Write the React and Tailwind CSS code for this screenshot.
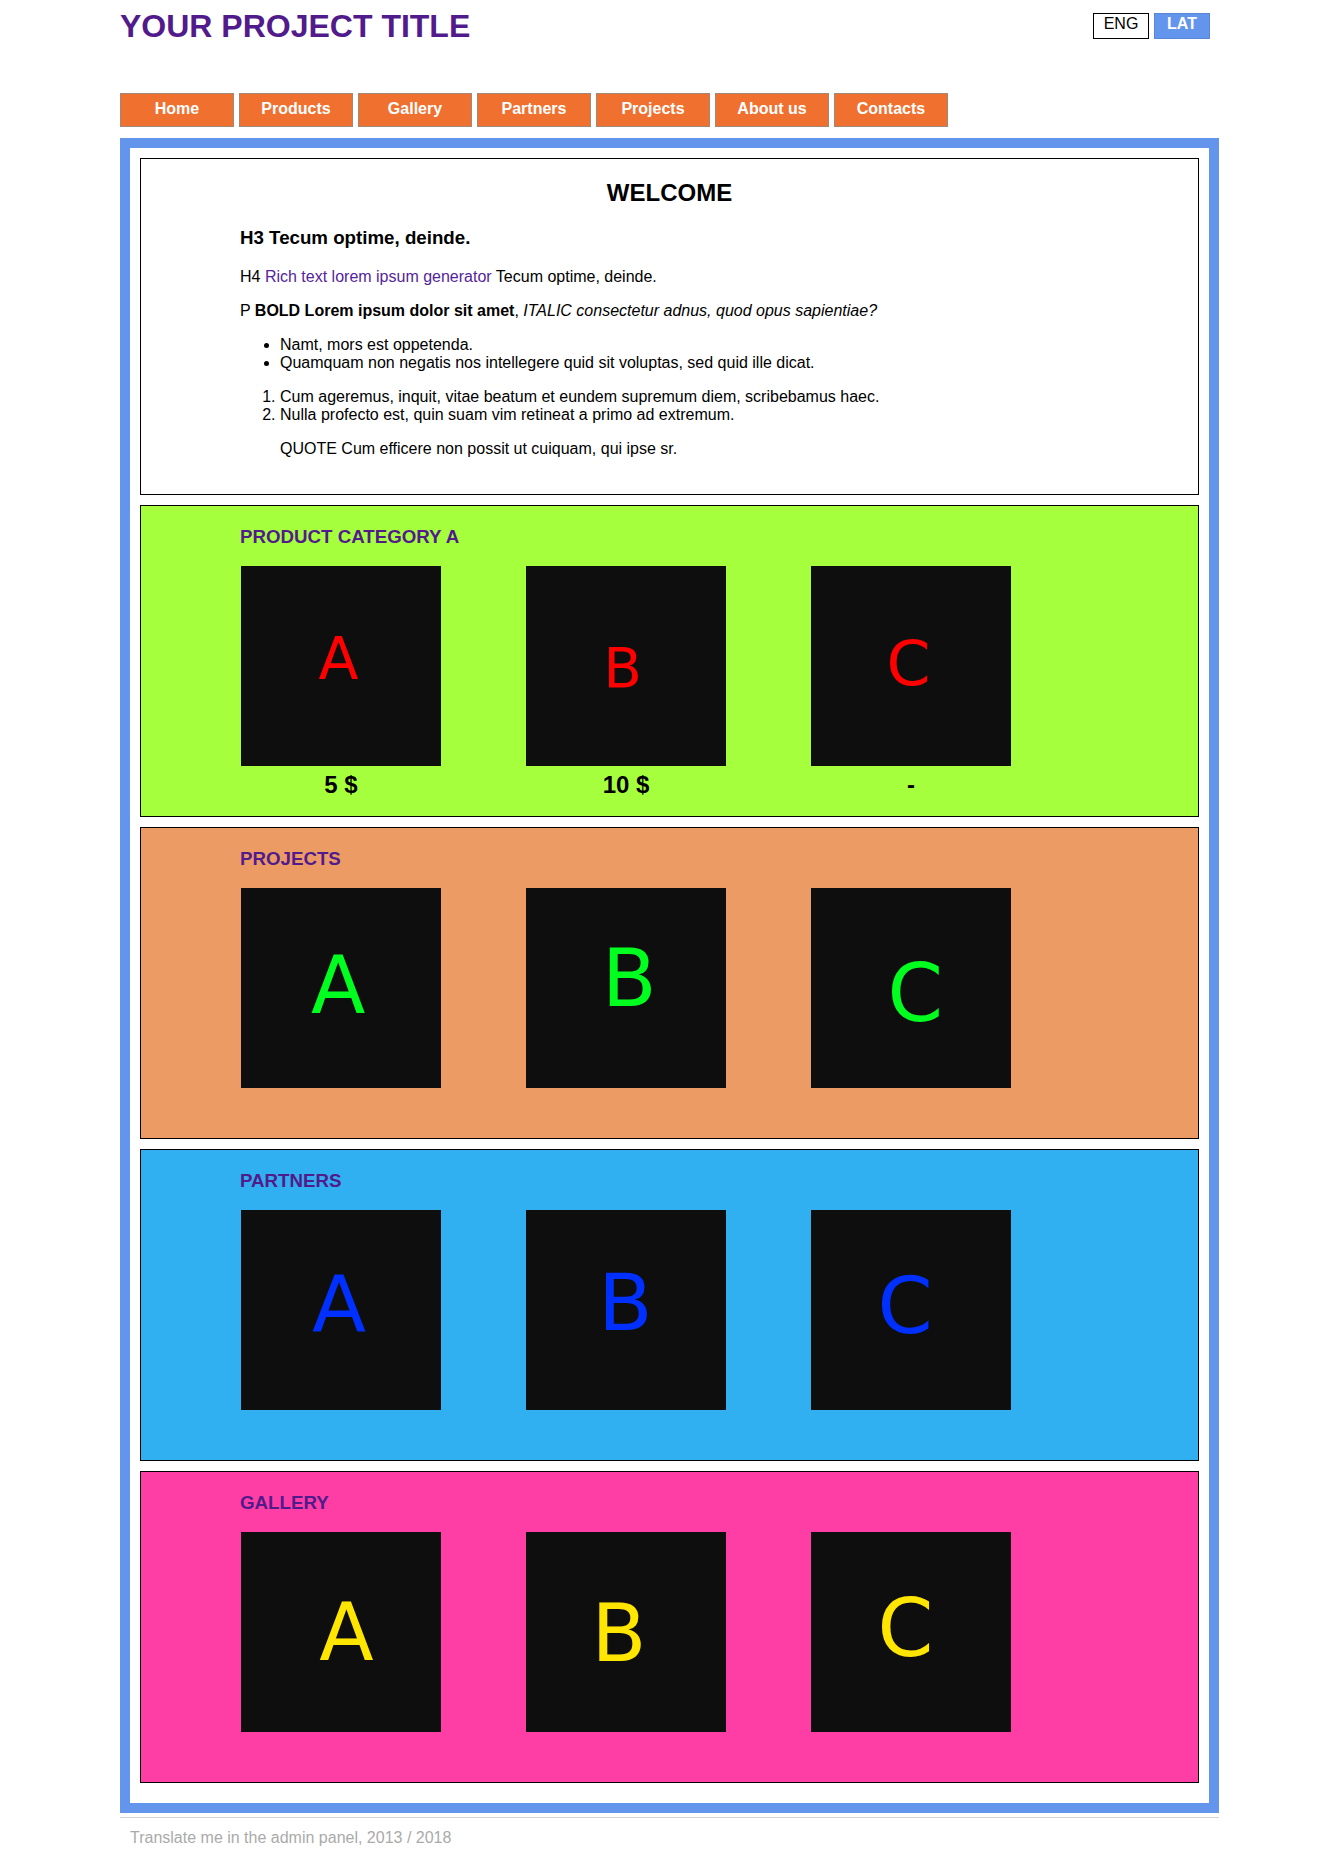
import React from 'react';

// --- Data ---
const navItems = ['Home', 'Products', 'Gallery', 'Partners', 'Projects', 'About us', 'Contacts'];

const sections = [
  {
    title: 'PRODUCT CATEGORY A',
    bg: 'bg-[#a6ff3c]',
    color: '#ff0000',
    items: [
      { letter: 'A', x: 77.5, y: 112.5, size: 58.5, caption: '5 $' },
      { letter: 'B', x: 77.5, y: 120.7, size: 56, caption: '10 $' },
      { letter: 'C', x: 75.5, y: 118.8, size: 63, caption: '-' },
    ],
  },
  {
    title: 'PROJECTS',
    bg: 'bg-[#ed9b64]',
    color: '#00ff1e',
    items: [
      { letter: 'A', x: 70, y: 125, size: 79.5 },
      { letter: 'B', x: 76, y: 118, size: 79.5 },
      { letter: 'C', x: 76.5, y: 133, size: 79.5 },
    ],
  },
  {
    title: 'PARTNERS',
    bg: 'bg-[#30b0f0]',
    color: '#0030ff',
    items: [
      { letter: 'A', x: 71, y: 122, size: 79 },
      { letter: 'B', x: 72.3, y: 120, size: 79 },
      { letter: 'C', x: 66.6, y: 123, size: 79 },
    ],
  },
  {
    title: 'GALLERY',
    bg: 'bg-[#ff3ea5]',
    color: '#ffe600',
    items: [
      { letter: 'A', x: 78.2, y: 128, size: 79.5 },
      { letter: 'B', x: 65.6, y: 129, size: 80 },
      { letter: 'C', x: 66.5, y: 124.3, size: 80 },
    ],
  },
];

// --- Header with title and language switch ---
const Header = () => (
  <div className="flex justify-between items-start h-[93px]">
    <h1 className="mt-[8px] text-[32px] leading-[36px] font-bold text-[#511b8c]">YOUR PROJECT TITLE</h1>
    <div className="flex gap-[5px] mt-[13px] mr-[9px]">
      <span className="w-[56px] h-[26px] pt-[1px] border border-black text-center text-[16px] leading-[18px] text-black">ENG</span>
      <span className="w-[56px] h-[26px] pt-[1px] border border-[#5a86d6] bg-[#6495ed] text-center text-[16px] leading-[18px] font-bold text-white">LAT</span>
    </div>
  </div>
);

const Nav = () => (
  <nav className="flex gap-[5px] h-[34px]">
    {navItems.map(item => (
      <a key={item} className="w-[114px] h-[34px] pt-[6px] border border-[#a08878] bg-[#f07030] text-center text-[16px] leading-[18px] font-bold text-white">
        {item}
      </a>
    ))}
  </nav>
);

// --- Welcome block ---
const Welcome = () => (
  <div className="border border-black bg-white px-[99px] pt-[20px] pb-[36px] text-black text-[16px] leading-[18px]">
    <h2 className="text-center text-[24px] leading-[28px] font-bold">WELCOME</h2>
    <h3 className="mt-[20px] text-[18.72px] leading-[22px] font-bold">H3 Tecum optime, deinde.</h3>
    <p className="mt-[19px]">
      H4 <a className="text-[#55249c]">Rich text lorem ipsum generator</a> Tecum optime, deinde.
    </p>
    <p className="mt-4">
      P <b>BOLD Lorem ipsum dolor sit amet</b>, <i>ITALIC consectetur adnus, quod opus sapientiae?</i>
    </p>
    <ul className="mt-4 pl-[40px] list-disc">
      <li>Namt, mors est oppetenda.</li>
      <li>Quamquam non negatis nos intellegere quid sit voluptas, sed quid ille dicat.</li>
    </ul>
    <ol className="mt-4 pl-[40px] list-decimal">
      <li>Cum ageremus, inquit, vitae beatum et eundem supremum diem, scribebamus haec.</li>
      <li>Nulla profecto est, quin suam vim retineat a primo ad extremum.</li>
    </ol>
    <blockquote className="mt-4 ml-[40px]">QUOTE Cum efficere non possit ut cuiquam, qui ipse sr.</blockquote>
  </div>
);

// --- Picture placeholder with a letter ---
const Picture = ({ letter, x, y, size, color }) => (
  <svg width="200" height="200" viewBox="0 0 200 200" className="block">
    <rect width="200" height="200" fill="#0e0e0e" />
    <text x={x} y={y} fontFamily="DejaVu Sans" fontSize={size} fill={color}>{letter}</text>
  </svg>
);

const Section = ({ section }) => (
  <div className={`h-[312px] border border-black ${section.bg} pl-[99px] pt-[20px]`}>
    <h3 className="text-[18.72px] leading-[22px] font-bold text-[#511b8c]">{section.title}</h3>
    <div className="mt-[18px] flex gap-[85px] pl-[1px]">
      {section.items.map(item => (
        <div key={item.letter} className="w-[200px]">
          <Picture {...item} color={section.color} />
          {item.caption && (
            <p className="mt-[5px] text-center text-[24px] leading-[28px] font-bold text-black">{item.caption}</p>
          )}
        </div>
      ))}
    </div>
  </div>
);

export default function App() {
  return (
    <div className="min-h-screen bg-white font-['Liberation_Sans',Arial,sans-serif]">
      <div className="w-[1099px] mx-auto">
        <Header />
        <Nav />
        <main className="mt-[11px] border-[10px] border-[#6495ed] bg-white px-[10px] pt-[10px] pb-[20px] flex flex-col gap-[10px]">
          <Welcome />
          {sections.map(section => (
            <Section key={section.title} section={section} />
          ))}
        </main>
        <footer className="mt-[4px] border-t border-[#d3d3d3] pl-[10px] pt-[11px] pb-[20px] text-[16px] leading-[18px] text-[#aaaaaa]">
          Translate me in the admin panel, 2013 / 2018
        </footer>
      </div>
    </div>
  );
}
